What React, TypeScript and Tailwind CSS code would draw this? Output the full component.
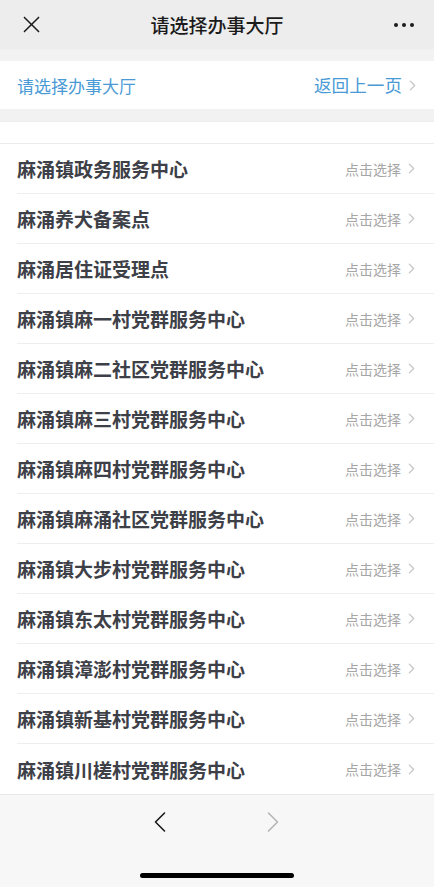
import React from "react";

const halls = [
  "麻涌镇政务服务中心",
  "麻涌养犬备案点",
  "麻涌居住证受理点",
  "麻涌镇麻一村党群服务中心",
  "麻涌镇麻二社区党群服务中心",
  "麻涌镇麻三村党群服务中心",
  "麻涌镇麻四村党群服务中心",
  "麻涌镇麻涌社区党群服务中心",
  "麻涌镇大步村党群服务中心",
  "麻涌镇东太村党群服务中心",
  "麻涌镇漳澎村党群服务中心",
  "麻涌镇新基村党群服务中心",
  "麻涌镇川槎村党群服务中心",
];

const font = { fontFamily: '"Noto Sans CJK SC", "Noto Sans", sans-serif' };

function Chevron({ className = "" }: { className?: string }) {
  return (
    <svg
      viewBox="0 0 8 12"
      className={className}
      fill="none"
      stroke="currentColor"
      strokeWidth="1.6"
      strokeLinecap="round"
      strokeLinejoin="round"
    >
      <polyline points="1.5,1 6.5,6 1.5,11" />
    </svg>
  );
}

export default function App() {
  return (
    <div
      className="flex flex-col w-[434px] h-[887px] bg-white overflow-hidden"
      style={font}
    >
      {/* nav bar */}
      <div className="relative flex items-center justify-center h-[49px] bg-[#ededed] shrink-0">
        <svg
          viewBox="0 0 18 18"
          className="absolute left-[23px] top-[16px] w-[17px] h-[17px] text-[#1a1a1a]"
          fill="none"
          stroke="currentColor"
          strokeWidth="1.6"
          strokeLinecap="round"
        >
          <line x1="1.5" y1="1.5" x2="16.5" y2="16.5" />
          <line x1="16.5" y1="1.5" x2="1.5" y2="16.5" />
        </svg>
        <p className="text-[19px] font-medium text-[#1b1b1b] leading-none">
          请选择办事大厅
        </p>
        <div className="absolute right-[20px] top-[23px] flex gap-[4px]">
          <span className="w-[4px] h-[4px] rounded-full bg-[#1b1b1b]" />
          <span className="w-[4px] h-[4px] rounded-full bg-[#1b1b1b]" />
          <span className="w-[4px] h-[4px] rounded-full bg-[#1b1b1b]" />
        </div>
      </div>

      <div className="h-[12px] bg-[#f2f2f2] shrink-0" />

      {/* sub header */}
      <div className="flex items-center justify-between h-[48px] pl-[17px] pr-[18px] bg-white shrink-0">
        <p className="text-[17px] text-[#4a9ad6] leading-none">请选择办事大厅</p>
        <div className="flex items-center gap-[7px]">
          <p className="text-[17.6px] text-[#4a9ad6] leading-none">返回上一页</p>
          <Chevron className="w-[7px] h-[11px] text-[#c7c7c7]" />
        </div>
      </div>

      <div className="h-[12px] bg-[#f2f2f2] shrink-0" />
      <div className="h-[23px] bg-white border-t border-b border-[#ececec] shrink-0" />

      {/* list */}
      <div className="flex flex-col shrink-0">
        {halls.map((name, i) => (
          <div key={name} className="flex h-[50px] pl-[17px]">
            <div
              className={`flex flex-1 items-center justify-between pr-[19px] ${
                i < halls.length - 1 ? "border-b border-[#eeeeee]" : ""
              }`}
            >
              <p className="text-[19px] font-semibold text-[#3e4048] leading-none">
                {name}
              </p>
              <div className="flex items-center gap-[7px]">
                <p className="text-[14px] text-[#a6a6a6] leading-none">点击选择</p>
                <Chevron className="w-[7px] h-[11px] text-[#c7c7c7]" />
              </div>
            </div>
          </div>
        ))}
      </div>

      {/* bottom toolbar */}
      <div className="flex flex-col flex-1 bg-[#f7f7f7] border-t border-[#e8e8e8]">
        <div className="flex justify-center items-center gap-[101px] pt-[17px] pr-[1px]">
          <svg
            viewBox="0 0 12 20"
            className="w-[12px] h-[20px] text-[#1a1a1a]"
            fill="none"
            stroke="currentColor"
            strokeWidth="1.6"
            strokeLinecap="round"
            strokeLinejoin="round"
          >
            <polyline points="10.5,1 1.5,10 10.5,19" />
          </svg>
          <svg
            viewBox="0 0 12 20"
            className="w-[12px] h-[20px] text-[#b5b5b5]"
            fill="none"
            stroke="currentColor"
            strokeWidth="1.6"
            strokeLinecap="round"
            strokeLinejoin="round"
          >
            <polyline points="1.5,1 10.5,10 1.5,19" />
          </svg>
        </div>
        <div className="flex justify-center mt-auto mb-[9px]">
          <div className="w-[154px] h-[5px] rounded-full bg-black" />
        </div>
      </div>
    </div>
  );
}
